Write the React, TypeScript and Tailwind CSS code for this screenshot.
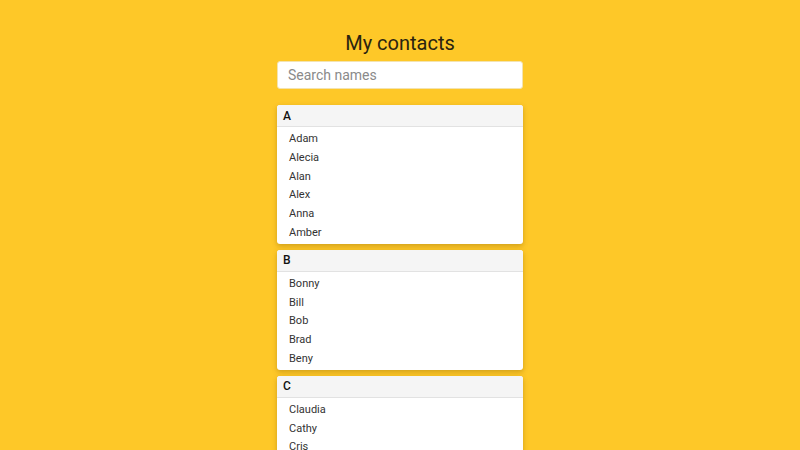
const groups: { letter: string; names: string[] }[] = [
  { letter: 'A', names: ['Adam', 'Alecia', 'Alan', 'Alex', 'Anna', 'Amber'] },
  { letter: 'B', names: ['Bonny', 'Bill', 'Bob', 'Brad', 'Beny'] },
  { letter: 'C', names: ['Claudia', 'Cathy', 'Cris', 'Carl', 'Chloe'] },
]

export default function App() {
  return (
    <main
      className="min-h-screen bg-[#fec828] text-[#222] pt-[30px]"
      style={{ fontFamily: 'Roboto, "Noto Sans", sans-serif' }}
    >
      <div className="w-[246px] mx-auto">
        <h1 className="text-[20px] leading-[26px] text-center text-[#2a2410] mb-[5px]">My contacts</h1>
        <input
          type="text"
          placeholder="Search names"
          className="w-full h-[28px] rounded-[3px] bg-white px-[10px] text-[14px] text-[#333] placeholder:text-[#8a8a8a] outline-none border border-[#f3e3b0]"
        />

        <div className="mt-[16px] flex flex-col gap-[6px]">
          {groups.map((group) => (
            <div
              key={group.letter}
              className="bg-white rounded-[3px] overflow-hidden shadow-[0_2px_5px_rgba(120,80,0,0.35)]"
            >
              {/* Header */}
              <div className="h-[22px] bg-[#f5f5f5] border-b border-[#e2e2e2] px-[6px] flex items-center text-[12px] font-medium text-[#111]">
                {group.letter}
              </div>
              {/* Names */}
              <ul className="pt-[3px] pb-[1px]">
                {group.names.map((name) => (
                  <li key={name} className="pl-[12px] text-[11px] leading-[18.8px] text-[#333]">
                    {name}
                  </li>
                ))}
              </ul>
            </div>
          ))}
        </div>
      </div>
    </main>
  )
}
